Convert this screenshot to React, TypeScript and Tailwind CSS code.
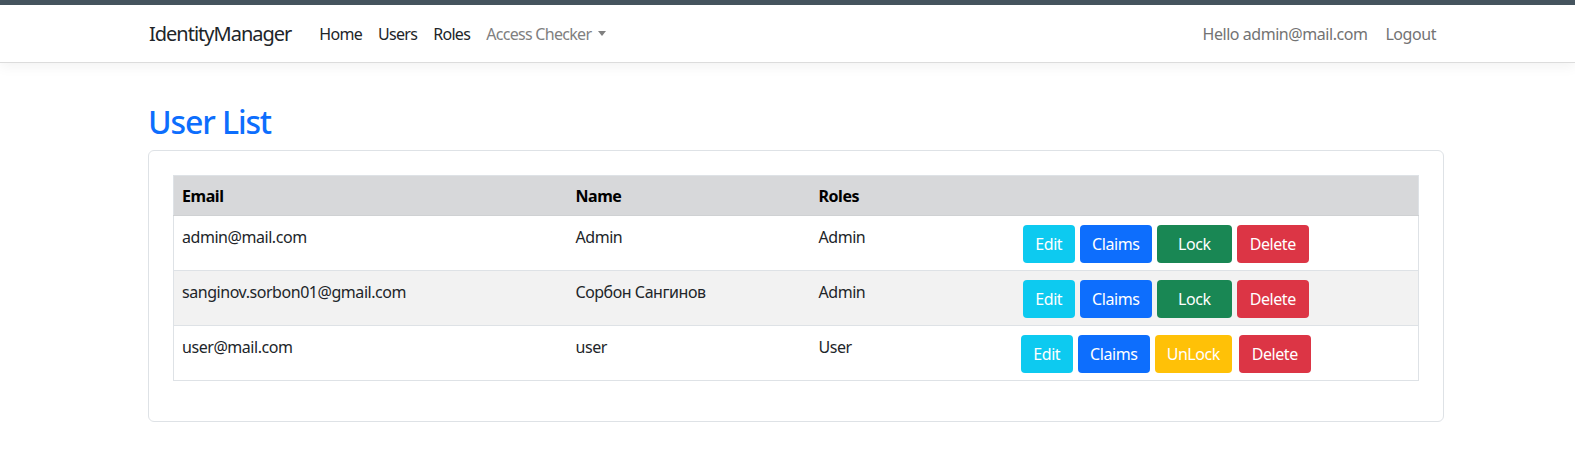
import React from 'react';

type User = {
  email: string;
  name: string;
  roles: string;
  locked: boolean;
};

const users: User[] = [
  { email: 'admin@mail.com', name: 'Admin', roles: 'Admin', locked: false },
  { email: 'sanginov.sorbon01@gmail.com', name: 'Сорбон Сангинов', roles: 'Admin', locked: false },
  { email: 'user@mail.com', name: 'user', roles: 'User', locked: true },
];

const font = { fontFamily: '"Segoe UI", "Noto Sans", "Open Sans", sans-serif' };

function Btn({ children, className }: { children: React.ReactNode; className: string }) {
  return (
    <button className={`h-[38px] rounded-[4px] text-[16px] text-white leading-6 ${className}`}>
      {children}
    </button>
  );
}

export default function App() {
  return (
    <div className="min-h-screen bg-white text-[#212529] tracking-[-0.45px]" style={font}>
      {/* top strip */}
      <div className="h-[5px] bg-[#46555f]"></div>

      {/* Navbar */}
      <nav className="h-[58px] bg-white border-b border-[#dcdcdc] shadow-[0_4px_12px_rgba(0,0,0,0.05)]">
        <div className="ml-[148px] w-[1296px] h-full flex items-center justify-between">
          <div className="flex items-center tracking-[-0.7px]">
            <span className="text-[20px] tracking-[-1px] text-[#212529] mr-[20px] ml-px">IdentityManager</span>
            <a className="px-2 text-[16px] text-[#212529]">Home</a>
            <a className="px-2 text-[16px] text-[#212529]">Users</a>
            <a className="px-2 text-[16px] text-[#212529]">Roles</a>
            <a className="px-2 text-[16px] text-[#808080] flex items-center">
              Access Checker
              <span className="ml-[7px] w-0 h-0 border-l-[4px] border-r-[4px] border-t-[5px] border-l-transparent border-r-transparent border-t-[#808080]"></span>
            </a>
          </div>
          <div className="flex items-center">
            <span className="px-2 text-[16px] text-[#737373]">Hello admin@mail.com</span>
            <a className="px-2 ml-[2px] text-[16px] text-[#737373]">Logout</a>
          </div>
        </div>
      </nav>

      {/* Content */}
      <main className="ml-[148px] w-[1296px] pt-[40px]">
        <h1 className="text-[32px] leading-[38px] font-medium tracking-[-1.1px] text-[#0d6efd] mb-[9px]">User List</h1>

        <div className="border border-[#dee2e6] rounded-[6px] pt-[24px] pb-[40px] px-[24px]">
          <table className="w-full border-collapse border border-[#dee2e6] text-[16px]">
            <thead>
              <tr className="bg-[#d7d8da] h-[40px] border-b border-[#cfd1d3] text-black">
                <th className="text-left font-bold px-2 w-[394px]">Email</th>
                <th className="text-left font-bold px-2 w-[243px]">Name</th>
                <th className="text-left font-bold px-2 w-[100px]">Roles</th>
                <th className="px-2"></th>
              </tr>
            </thead>
            <tbody>
              {users.map((u, i) => (
                <tr
                  key={u.email}
                  className={`h-[55px] border-b border-[#dee2e6] ${i === 1 ? 'bg-[#f2f2f2]' : 'bg-white'}`}
                >
                  <td className="align-top px-2 pt-[9px]">{u.email}</td>
                  <td className="align-top px-2 pt-[9px]">{u.name}</td>
                  <td className="align-top px-2 pt-[9px]">{u.roles}</td>
                  <td className="align-top px-2 pt-[9px]">
                    <div className="flex justify-center gap-[5px] pl-[3px]">
                      <Btn className="w-[52px] bg-[#0dcaf0]">Edit</Btn>
                      <Btn className="w-[72px] bg-[#0d6efd]">Claims</Btn>
                      {u.locked ? (
                        <Btn className="w-[77px] bg-[#ffc107] mr-[2px]">UnLock</Btn>
                      ) : (
                        <Btn className="w-[75px] bg-[#198754]">Lock</Btn>
                      )}
                      <Btn className="w-[72px] bg-[#dc3545]">Delete</Btn>
                    </div>
                  </td>
                </tr>
              ))}
            </tbody>
          </table>
        </div>
      </main>
    </div>
  );
}
